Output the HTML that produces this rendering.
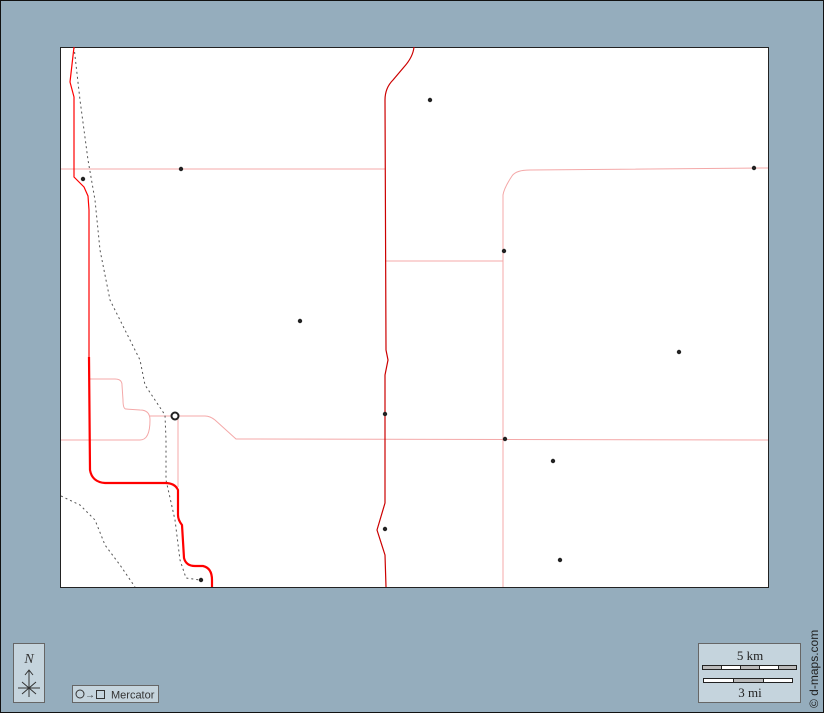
<!DOCTYPE html>
<html><head><meta charset="utf-8"><style>
html,body{margin:0;padding:0}
body{width:824px;height:713px;overflow:hidden;background:#95adbd;position:relative;font-family:"Liberation Serif",serif}
.frame{position:absolute;left:0;top:0;width:822px;height:711px;border:1px solid #111}
</style></head><body>
<div class="frame"></div>
<svg width="824" height="713" style="position:absolute;left:0;top:0">
<rect x="60.5" y="47.5" width="708" height="540" fill="#fff" stroke="#222" stroke-width="1"/>
<g fill="none" stroke-linejoin="round">
<g stroke="#f4a8a8" stroke-width="1">
<path d="M61 169 L385 169"/>
<path d="M385 261 L503 261"/>
<path d="M503 587 L503 195 Q504 188 512 176 Q516 170 530 170 L768 168"/>
<path d="M61 440 L140 440 Q150 440 150 420 Q150 410 140 410 L126 409 Q123 409 123 400 L122 385 Q122 379 115 379 L90 379"/>
<path d="M150 416 L205 416 Q210 416 215 420 L236 439 L768 440"/>
<path d="M178 416 L178 487"/>
</g>
<g stroke="#555" stroke-width="1" stroke-dasharray="2,3">
<path d="M74 47 L80 100 L88 160 L95 200 L100 250 L110 300 L125 330 L140 360 L145 385 L155 400 L165 415 L166 440 L166 480 L175 520 L180 560 L186 578 L200 580"/>
<path d="M61 496 L80 505 L95 520 L105 545 L120 565 L135 587"/>
</g>
<path d="M74 47 L70 82 L74 97 L74 177 L84 187 L88 196 L89 210 L89 357" stroke="#f00" stroke-width="1.2"/>
<path d="M89 357 L90 470 Q92 482 105 483 L165 483 Q175 483 178 490 L178 515 Q178 520 182 525 L184 558 Q186 566 195 566 L203 566 Q212 568 212 580 L212 587" stroke="#f00" stroke-width="2.2"/>
<path d="M414 47 Q413 57 404 67 L393 80 Q385 88 385 100 L386 350 L388 360 L385 375 L385 503 L377 530 L385 555 L386 587" stroke="#c00" stroke-width="1.2"/>
</g>
<g fill="#222">
<circle cx="430" cy="100" r="2.2"/><circle cx="181" cy="169" r="2.2"/><circle cx="83" cy="179" r="2.2"/>
<circle cx="754" cy="168" r="2.2"/><circle cx="504" cy="251" r="2.2"/><circle cx="300" cy="321" r="2.2"/>
<circle cx="679" cy="352" r="2.2"/><circle cx="385" cy="414" r="2.2"/><circle cx="505" cy="439" r="2.2"/>
<circle cx="553" cy="461" r="2.2"/><circle cx="385" cy="529" r="2.2"/><circle cx="560" cy="560" r="2.2"/>
<circle cx="201" cy="580" r="2.2"/>
</g>
<circle cx="175" cy="416" r="3.5" fill="#fff" stroke="#222" stroke-width="2"/>
<rect x="13.5" y="643.5" width="31" height="59" fill="#c5d4dd" stroke="#666"/>
<text x="29" y="663" text-anchor="middle" font-family="Liberation Serif" font-style="italic" font-size="14" fill="#333">N</text>
<g stroke="#333" stroke-width="1" fill="none"><path d="M29 670 L29 697 M25 675 L29 670 L33 675 M18 688 L40 688 M22 682 L36 694 M36 682 L22 694"/></g>
<rect x="72.5" y="685.5" width="86" height="17" fill="#c5d4dd" stroke="#666"/>
<circle cx="80" cy="694" r="4" fill="none" stroke="#333"/>
<text x="85" y="698" font-family="Liberation Sans" font-size="10" fill="#333">→</text>
<rect x="96.5" y="690.5" width="8" height="8" fill="none" stroke="#333"/>
<text x="111" y="698.5" font-family="Liberation Sans" font-size="11" fill="#333">Mercator</text>
<rect x="698.5" y="643.5" width="102" height="59" fill="#c5d4dd" stroke="#666"/>
<text x="750" y="660" text-anchor="middle" font-size="13" fill="#222">5 km</text>
<g stroke="#222" stroke-width="1">
<rect x="702.5" y="665.5" width="94" height="4" fill="#fff"/>
<rect x="702.5" y="665.5" width="19" height="4" fill="#bbb"/>
<rect x="740.5" y="665.5" width="19" height="4" fill="#bbb"/>
<rect x="778.5" y="665.5" width="18" height="4" fill="#bbb"/>
<rect x="703.5" y="678.5" width="89" height="4" fill="#fff"/>
<rect x="733.5" y="678.5" width="30" height="4" fill="#bbb"/>
</g>
<text x="750" y="697" text-anchor="middle" font-size="13" fill="#222">3 mi</text>
<text transform="translate(818,708) rotate(-90)" font-family="Liberation Sans" font-size="12" fill="#222">© d-maps.com</text>
</svg>
</body></html>
